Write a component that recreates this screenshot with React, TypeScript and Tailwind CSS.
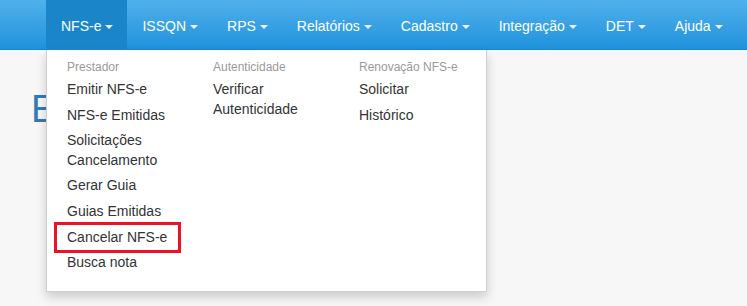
const navItems = ['NFS-e', 'ISSQN', 'RPS', 'Relatórios', 'Cadastro', 'Integração', 'DET', 'Ajuda']

const columns = [
  {
    title: 'Prestador',
    items: ['Emitir NFS-e', 'NFS-e Emitidas', 'Solicitações Cancelamento', 'Gerar Guia', 'Guias Emitidas', 'Cancelar NFS-e', 'Busca nota'],
  },
  { title: 'Autenticidade', items: ['Verificar Autenticidade'] },
  { title: 'Renovação NFS-e', items: ['Solicitar', 'Histórico'] },
]

function Caret() {
  return <span className="ml-[4px] inline-block align-middle w-0 h-0 border-t-[4px] border-t-white/90 border-x-[4px] border-x-transparent" />
}

export default function App() {
  return (
    <div className="relative w-[747px] h-[306px] overflow-hidden bg-[#f7f7f7] font-['Liberation_Sans',Arial,sans-serif]">
      <nav className="h-[50px] bg-gradient-to-b from-[#4eb1ea] to-[#1e92dd] border-b border-[#1b86cf]">
        <ul className="flex pl-[46px] h-full">
          {navItems.map((item, i) => (
            <li
              key={item}
              className={`flex items-center whitespace-nowrap pl-[15px] pr-[14px] pt-[4px] text-[14px] text-white ${i === 0 ? 'bg-[#1a86c9]' : ''}`}
            >
              {item}
              <Caret />
            </li>
          ))}
        </ul>
      </nav>

      {/* page title, mostly hidden behind the open menu */}
      <div className="pl-[31px] pt-[38px]">
        <h1 className="text-[38px] leading-[42px] text-[#337ab7]">E</h1>
      </div>

      {/* dropdown menu */}
      <div className="absolute left-[46px] top-[50px] w-[441px] h-[242px] bg-white border border-[#cfcfcf] border-t-0 shadow-[0_5px_10px_rgba(0,0,0,0.18)] pl-[20px] pt-[8px]">
        <div className="grid grid-cols-[146px_146px_1fr]">
          {columns.map((col) => (
            <div key={col.title}>
              <div className="text-[12px] leading-[18px] text-[#9a9a9a]">{col.title}</div>
              <ul className="mt-[1px]">
                {col.items.map((item) => (
                  <li key={item} className="py-[3px] text-[14px] leading-[19.6px] text-[#333]">
                    {item === 'Cancelar NFS-e' ? (
                      <span className="relative inline-block">
                        {item}
                        <span className="absolute -left-[13px] -right-[14px] -top-[6px] -bottom-[6px] border-[3px] border-[#e8141e]" />
                      </span>
                    ) : item === 'Solicitações Cancelamento' ? (
                      <span>Solicitações<br />Cancelamento</span>
                    ) : item === 'Verificar Autenticidade' ? (
                      <span>Verificar<br />Autenticidade</span>
                    ) : (
                      item
                    )}
                  </li>
                ))}
              </ul>
            </div>
          ))}
        </div>
      </div>
    </div>
  )
}
